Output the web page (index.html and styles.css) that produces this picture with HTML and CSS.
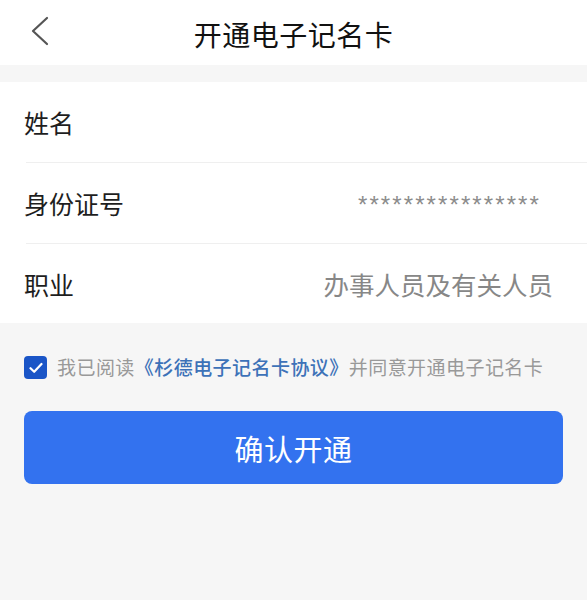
FILE: index.html
```html
<!DOCTYPE html>
<html lang="zh-CN">
<head>
<meta charset="utf-8">
<title>开通电子记名卡</title>
<link rel="stylesheet" href="styles.css">
</head>
<body>
<header class="topbar">
  <svg class="back" width="20" height="30" viewBox="0 0 20 30" aria-hidden="true">
    <path d="M17 2 L3 15 L17 28" fill="none" stroke="#555" stroke-width="2.2" stroke-linecap="round" stroke-linejoin="round"/>
  </svg>
  <h1 class="title">开通电子记名卡</h1>
</header>

<section class="form">
  <div class="row">
    <span class="label">姓名</span>
    <span class="value"></span>
  </div>
  <div class="row">
    <span class="label">身份证号</span>
    <span class="value mask">****************</span>
  </div>
  <div class="row last">
    <span class="label">职业</span>
    <span class="value">办事人员及有关人员</span>
  </div>
</section>

<div class="agree">
  <span class="check">
    <svg width="14" height="12" viewBox="0 0 14 12" aria-hidden="true">
      <path d="M1.5 6.2 L5.2 9.8 L12.5 2" fill="none" stroke="#fff" stroke-width="2.2" stroke-linecap="round" stroke-linejoin="round"/>
    </svg>
  </span>
  <p class="agree-text">我已阅读<span class="link">《杉德电子记名卡协议》</span>并同意开通电子记名卡</p>
</div>

<div class="actions">
  <button class="confirm" type="button">确认开通</button>
</div>
</body>
</html>
```

FILE: styles.css
```css
* { box-sizing: border-box; }
html, body {
  margin: 0;
  padding: 0;
  background: #f6f6f6;
  font-family: "Noto Sans CJK SC", "Noto Sans", sans-serif;
}
.topbar {
  position: relative;
  height: 65px;
  background: #fff;
  display: flex;
  align-items: center;
  justify-content: center;
}
.back {
  position: absolute;
  left: 30px;
  top: 16px;
}
.title {
  margin: 0;
  font-size: 28px;
  font-weight: 400;
  color: #111;
  line-height: 1;
  letter-spacing: 0.5px;
  padding-top: 2px;
}
.form {
  margin-top: 17px;
  background: #fff;
  padding-left: 26px;
}
.row {
  height: 81px;
  display: flex;
  align-items: center;
  justify-content: space-between;
  border-bottom: 1px solid #efefef;
  padding-right: 34px;
}
.row.last {
  border-bottom: none;
  height: 79px;
}
.label {
  font-size: 25px;
  color: #1e1e1e;
  margin-left: -2px;
}
.value {
  font-size: 25.5px;
  color: #878787;
}
.value.mask {
  font-family: "Liberation Sans", sans-serif;
  font-size: 24px;
  letter-spacing: 2.1px;
  margin-right: 12px;
  margin-top: 4px;
  color: #8c8c8c;
}
.agree {
  display: flex;
  padding: 31px 24px 0;
  height: 88px;
  align-items: flex-start;
}
.check {
  width: 23px;
  height: 23px;
  border-radius: 4px;
  background: #1a55c7;
  display: flex;
  align-items: center;
  justify-content: center;
  flex: none;
  margin-top: 2px;
}
.agree-text {
  margin: 0 0 0 10px;
  font-size: 19px;
  line-height: 26px;
  letter-spacing: 0.45px;
  color: #999;
  white-space: nowrap;
}
.link {
  color: #3d72b8;
  font-weight: 500;
}
.actions {
  padding: 0 24px;
}
.confirm {
  display: block;
  width: 539px;
  height: 73px;
  border: none;
  border-radius: 8px;
  background: #3372ef;
  color: #fff;
  font-family: "Noto Sans CJK SC", "Noto Sans", sans-serif;
  font-size: 29px;
  letter-spacing: 0.5px;
}
```
